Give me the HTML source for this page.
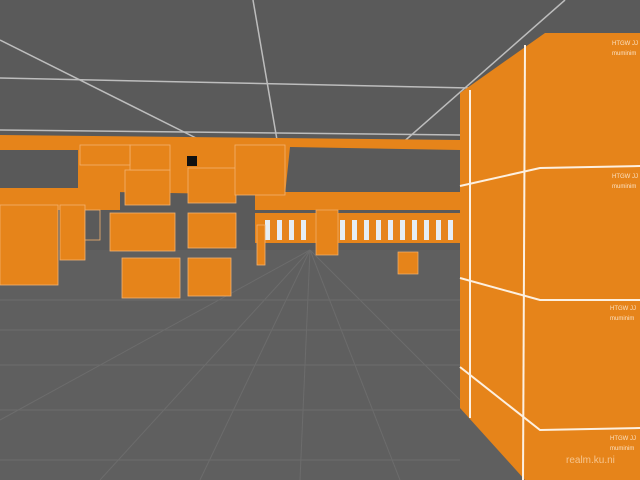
<!DOCTYPE html>
<html><head><meta charset="utf-8"><style>
html,body{margin:0;padding:0;background:#5b5b5b;overflow:hidden}
svg{display:block}
text{font-family:"Liberation Sans",sans-serif}
</style></head><body>
<svg width="640" height="480" viewBox="0 0 640 480" xmlns="http://www.w3.org/2000/svg">
<rect width="640" height="480" fill="#5a5a5a"/>
<rect x="0" y="250" width="640" height="230" fill="#5f5f5f"/>
<g stroke="#6c6c6c" stroke-width="1">
<line x1="0" y1="300" x2="460" y2="300"/><line x1="0" y1="330" x2="460" y2="330"/>
<line x1="0" y1="365" x2="460" y2="365"/><line x1="0" y1="410" x2="460" y2="410"/>
<line x1="0" y1="460" x2="460" y2="460"/>
<line x1="310" y1="250" x2="100" y2="480"/><line x1="310" y1="250" x2="200" y2="480"/>
<line x1="310" y1="250" x2="300" y2="480"/><line x1="310" y1="250" x2="400" y2="480"/>
<line x1="310" y1="250" x2="0" y2="420"/><line x1="310" y1="250" x2="460" y2="400"/>
</g>
<g stroke="#bdbdbd" stroke-width="1.5" fill="none">
<line x1="0" y1="40" x2="200" y2="140"/>
<line x1="253" y1="0" x2="277" y2="140"/>
<line x1="565" y1="0" x2="400" y2="145"/>
<line x1="0" y1="78" x2="470" y2="88"/>
<line x1="0" y1="130" x2="460" y2="135"/>
</g>
<polygon points="0,135 460,140 460,150 290,147 285,195 0,190" fill="#e6841a"/>
<rect x="0" y="150" width="78" height="38" fill="#595959"/>
<rect x="0" y="188" width="120" height="22" fill="#e6841a"/>
<rect x="290" y="150" width="170" height="42" fill="#5a5a5a"/>
<rect x="255" y="192" width="205" height="18" fill="#e6841a"/>
<rect x="255" y="213" width="205" height="30" fill="#e6841a"/>
<g fill="#e6eef4">
<rect x="265" y="220" width="5" height="20"/><rect x="277" y="220" width="5" height="20"/><rect x="289" y="220" width="5" height="20"/><rect x="301" y="220" width="5" height="20"/>
<rect x="340" y="220" width="5" height="20"/><rect x="352" y="220" width="5" height="20"/><rect x="364" y="220" width="5" height="20"/><rect x="376" y="220" width="5" height="20"/><rect x="388" y="220" width="5" height="20"/><rect x="400" y="220" width="5" height="20"/><rect x="412" y="220" width="5" height="20"/><rect x="424" y="220" width="5" height="20"/><rect x="436" y="220" width="5" height="20"/><rect x="448" y="220" width="5" height="20"/>
</g>
<rect x="316" y="210" width="22" height="45" fill="#e6841a" stroke="#f3b270" stroke-width=".7"/>
<rect x="398" y="252" width="20" height="22" fill="#e6841a" stroke="#f3b270" stroke-width=".7"/>
<g fill="#e6841a" stroke="#f3b270" stroke-width=".8">
<rect x="0" y="205" width="58" height="80"/>
<rect x="60" y="205" width="25" height="55"/>
<rect x="85" y="210" width="15" height="30" fill="#5a5a5a"/>
<rect x="110" y="213" width="65" height="38"/>
<rect x="125" y="170" width="45" height="35"/>
<rect x="130" y="145" width="40" height="25"/>
<rect x="80" y="145" width="50" height="20"/>
<rect x="122" y="258" width="58" height="40"/>
<rect x="188" y="168" width="48" height="35"/>
<rect x="188" y="213" width="48" height="35"/>
<rect x="188" y="258" width="43" height="38"/>
<rect x="235" y="145" width="50" height="50"/>
<rect x="257" y="225" width="8" height="40"/>
</g>
<rect x="187" y="156" width="10" height="10" fill="#111"/>
<polygon points="460,93 545,33 640,33 640,480 525,480 460,408" fill="#e6841a"/>
<g stroke="#fdf0e0" stroke-width="2" fill="none">
<line x1="470" y1="90" x2="470" y2="418"/>
<line x1="525" y1="45" x2="523" y2="480"/>
<polyline points="460,186 540,168 640,166"/>
<polyline points="460,278 540,300 640,300"/>
<polyline points="460,367 540,430 640,428"/>
</g>
<g fill="#fbe2c4" font-size="6">
<text x="612" y="45">HTGW JJ</text><text x="612" y="55">muminim</text>
<text x="612" y="178">HTGW JJ</text><text x="612" y="188">muminim</text>
<text x="610" y="310">HTGW JJ</text><text x="610" y="320">muminim</text>
<text x="610" y="440">HTGW JJ</text><text x="610" y="450">muminim</text>
</g>
<text x="566" y="463" font-size="10" fill="#f6c58e">realm.ku.ni</text>
</svg>
</body></html>
